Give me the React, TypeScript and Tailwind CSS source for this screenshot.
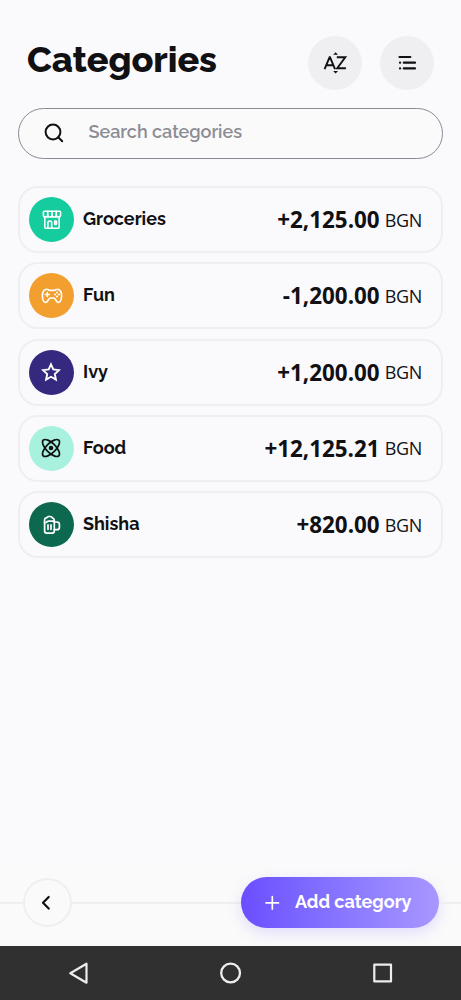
import React from "react";

type Category = {
  name: string;
  color: string;
  amount: string;
  icon: React.ReactNode;
};

const stroke = {
  fill: "none",
  stroke: "currentColor",
  strokeLinecap: "round" as const,
  strokeLinejoin: "round" as const,
};

const StoreIcon = () => (
  <svg className="size-5" viewBox="0 0 20 20" {...stroke} strokeWidth="1.6">
    <path d="M2.3 1.3h15.4q.9 0 .9.9v2.700a2.150 2.150 0 0 1-4.300 0 2.150 2.150 0 0 1-4.300 0 2.150 2.150 0 0 1-4.300 0 2.150 2.150 0 0 1-4.300 0V2.200q0-.9.9-.9z" />
    <path d="M5.700 1.300v3.600M10 1.300v3.600M14.300 1.300v3.600M2.800 7v10.300q0 1 1 1h12.400q1 0 1-1V7M5.900 18v-5.200q0-1.800 1.900-1.800t1.900 1.800V18" />
    <rect x="12.700" y="11" width="1.800" height="3.400" rx=".6" />
  </svg>
);

const GamepadIcon = () => (
  <svg className="h-5 w-[22px]" viewBox="0 0 22 20" {...stroke} strokeWidth="1.6">
    <path d="M4 3.800q1.700-1 3.400 0 .8.6 1.700.6h3.800q.9 0 1.700-.6 1.700-1 3.400 0 2.600 1.400 2.600 6.100 0 3.500-1.300 5.300-1.800 2.200-3.500.2l-2.100-2.800q-.5-.6-1.300-.6H9.600q-.8 0-1.300.6l-2.100 2.800q-1.700 2-3.500-.2-1.300-1.800-1.300-5.300 0-4.700 2.600-6.100z" />
    <path d="M6.300 6.500v4M4.300 8.500h4" />
    <g fill="currentColor" stroke="none">
      <circle cx="16" cy="6.600" r="1" />
      <circle cx="16" cy="10.400" r="1" />
      <circle cx="14.100" cy="8.500" r="1" />
      <circle cx="17.900" cy="8.500" r="1" />
    </g>
  </svg>
);

const StarIcon = () => (
  <svg className="mr-px size-5" viewBox="0 0 20 20" fill="none" stroke="currentColor" strokeWidth="1.900">
    <path d="M10 2.300l2.300 5.100 5.700.7-4.200 3.900 1.100 5.600-4.900-2.800-4.900 2.800 1.100-5.600L2 8.100l5.700-.7z" />
  </svg>
);

const AtomIcon = () => (
  <svg className="mr-px size-5" viewBox="0 0 20 20" {...stroke} strokeWidth="1.700">
    <ellipse cx="10" cy="10" rx="11" ry="4.700" transform="rotate(45 10 10)" />
    <ellipse cx="10" cy="10" rx="11" ry="4.700" transform="rotate(-45 10 10)" />
    <circle cx="10" cy="10" r="2.300" fill="currentColor" stroke="none" />
  </svg>
);

const BeerIcon = () => (
  <svg className="size-5" viewBox="0 0 20 20" {...stroke} strokeWidth="1.700">
    <path d="M2.600 7.200v8.900q0 2 2 2h5.700q2 0 2-2V7.200" />
    <path d="M2.600 8V5q0-2 2.200-2.400 1.200-1.400 3-1.200 1.800.1 2.600 1.500 1.900.5 1.900 2.500v.8H6.500q-1.500 0-2 1.100" />
    <path d="M12.300 7h2.700q2.400 0 2.400 2.500v2.700q0 2.500-2.400 2.500h-2.700M6 9.800v4.500M9 9.800v4.500" />
  </svg>
);

const categories: Category[] = [
  { name: "Groceries", color: "bg-[#14cc9e] text-white", amount: "+2,125.00", icon: <StoreIcon /> },
  { name: "Fun", color: "bg-[#f29f30] text-white", amount: "-1,200.00", icon: <GamepadIcon /> },
  { name: "Ivy", color: "bg-[#35287f] text-white", amount: "+1,200.00", icon: <StarIcon /> },
  { name: "Food", color: "bg-[#a9f1df] text-[#111114]", amount: "+12,125.21", icon: <AtomIcon /> },
  { name: "Shisha", color: "bg-[#0c684f] text-white", amount: "+820.00", icon: <BeerIcon /> },
];

function CategoryCard({ name, color, amount, icon }: Category) {
  return (
    <li className="flex h-[67px] items-center rounded-[20px] border-2 border-[#efeff1] pr-[19px] pl-[9px]">
      <span className={`flex size-[45px] shrink-0 items-center justify-center rounded-full ${color}`}>{icon}</span>
      <span className="ml-[9px] pb-[1px] text-[18px] leading-6 font-bold">{name}</span>
      <span className="ml-auto flex items-center font-['Open_Sans',sans-serif] leading-7">
        <span className="pt-[1px] text-[22.400px] font-bold">{amount}</span>
        <span className="ml-[5px] text-[18px] tracking-[-0.300px]">BGN</span>
      </span>
    </li>
  );
}

export default function App() {
  return (
    <div className="flex h-[1000px] w-full flex-col overflow-hidden bg-[#fafafc] font-['Raleway','Lato',sans-serif] text-[#111114]">
      <header className="flex items-start pt-9 pr-[27px] pl-[27px]">
        <h1 className="mt-[1px] text-[36px] leading-[44px] font-extrabold tracking-[-0.050px]">Categories</h1>
        <div className="ml-auto flex gap-[18px]">
          <button aria-label="Sort" className="flex size-[54px] items-center justify-center rounded-full bg-[#efeff1]">
            <svg className="size-[26px]" viewBox="0 0 26 26" fill="none" stroke="currentColor" strokeWidth="1.900">
              <path d="M2.600 19.200L7.600 7.100h.4l5 12.100M4.100 15.300h7.400M14.800 7.300h8.500l-8.100 11h8.700" />
              <path d="M11.200 4.700L13.600 2.200l2.400 2.500zM11.200 20.900l2.400 2.500 2.400-2.500z" fill="currentColor" stroke="none" />
            </svg>
          </button>
          <button aria-label="Options" className="flex size-[54px] items-center justify-center rounded-full bg-[#efeff1]">
            <svg className="size-5" viewBox="0 0 20 20" fill="none" stroke="currentColor" strokeWidth="2.200" strokeLinecap="round">
              <path d="M2.500 4h10.800M6.800 9.700H18M6.800 15.400H18M3 9.700h.1M3 15.400h.1" />
            </svg>
          </button>
        </div>
      </header>

      <label className="mx-[18px] mt-[17.500px] flex h-[51.500px] shrink-0 items-center rounded-full border border-[#8b8b94] bg-[#fafafa] pl-[23.500px]">
        <svg className="size-[22px]" viewBox="0 0 22 22" fill="none" stroke="currentColor" strokeWidth="2" strokeLinecap="round">
          <circle cx="10" cy="10" r="7.400" />
          <path d="M15.300 15.300l3.900 3.900" />
        </svg>
        <span className="ml-[24px] pb-[2px] text-[18px] leading-6 font-semibold tracking-[-0.020px] text-[#8c8c95]">Search categories</span>
      </label>

      <ul className="mx-[18px] mt-[27px] flex flex-col gap-[9.300px]">
        {categories.map((c) => (
          <CategoryCard key={c.name} {...c} />
        ))}
      </ul>

      <footer className="mt-auto flex h-[86px] shrink-0 flex-col bg-linear-to-b from-[#fafafc] to-[#fafafa] to-30%">
        <div className="mt-[17px] flex h-[51px] items-center">
          <div className="h-[2px] w-[22.500px] bg-[#efeff1]" />
          <button aria-label="Back" className="flex size-[49px] items-center justify-center rounded-full border-2 border-[#efeff1]">
            <svg className="size-5" viewBox="0 0 20 20" fill="none" stroke="currentColor" strokeWidth="2.200" strokeLinecap="round" strokeLinejoin="round">
              <path d="M11.700 4L6 9.800l5.700 5.800" />
            </svg>
          </button>
          <div className="h-[2px] flex-1 bg-[#efeff1]" />
          <button className="flex h-[51px] w-[197.500px] items-center rounded-full bg-linear-to-r from-[#6b4dff] to-[#a897ff] pl-[23px] text-white shadow-[0_5px_14px_rgba(107,77,255,0.17)]">
            <svg className="size-4" viewBox="0 0 16 16" fill="none" stroke="currentColor" strokeWidth="1.700" strokeLinecap="round">
              <path d="M8.300 1.700v12.400M2.100 7.900h12.400" />
            </svg>
            <span className="ml-[15px] pb-[2px] text-[18px] leading-6 font-bold">Add category</span>
          </button>
          <div className="h-[2px] w-[22.500px] bg-[#efeff1]" />
        </div>
      </footer>

      <nav className="relative z-10 flex h-[54px] shrink-0 items-center justify-between bg-[#303030] px-[66px] text-[#ededed]">
        <svg className="size-6" viewBox="0 0 24 24" fill="none" stroke="currentColor" strokeWidth="2.200" strokeLinejoin="round">
          <path d="M20.500 2.700v19L4.300 12.200z" />
        </svg>
        <svg className="size-6" viewBox="0 0 24 24" fill="none" stroke="currentColor" strokeWidth="2.300">
          <circle cx="11.600" cy="12" r="9.400" />
        </svg>
        <svg className="size-6" viewBox="0 0 24 24" fill="none" stroke="currentColor" strokeWidth="2.200" strokeLinejoin="round">
          <rect x="3.300" y="3.700" width="16.700" height="16.700" />
        </svg>
      </nav>
    </div>
  );
}
